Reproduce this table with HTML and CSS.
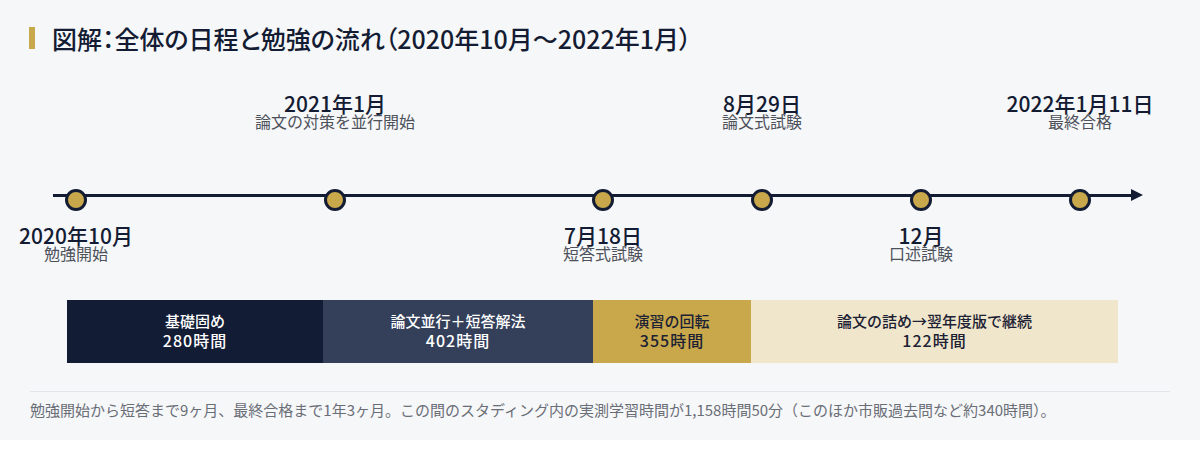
FILE: index.html
```html
<!DOCTYPE html>
<html lang="ja">
<head>
<meta charset="utf-8">
<title>図解：全体の日程と勉強の流れ</title>
<link rel="stylesheet" href="styles.css">
</head>
<body>
<div class="panel">
  <h2 class="title"><span class="accent"></span><span class="title-text">図解：全体の日程と勉強の流れ（2020年10月〜2022年1月）</span></h2>

  <div class="timeline">
    <div class="axis"></div>
    <div class="arrow"></div>

    <div class="event" style="left:46px">
      <div class="lbl-top"></div>
      <div class="dot"></div>
      <div class="lbl-bot"><div class="date">2020年10月</div><div class="sub">勉強開始</div></div>
    </div>
    <div class="event" style="left:305px">
      <div class="lbl-top"><div class="date">2021年1月</div><div class="sub">論文の対策を並行開始</div></div>
      <div class="dot"></div>
      <div class="lbl-bot"></div>
    </div>
    <div class="event" style="left:573px">
      <div class="lbl-top"></div>
      <div class="dot"></div>
      <div class="lbl-bot"><div class="date">7月18日</div><div class="sub">短答式試験</div></div>
    </div>
    <div class="event" style="left:732px">
      <div class="lbl-top"><div class="date">8月29日</div><div class="sub">論文式試験</div></div>
      <div class="dot"></div>
      <div class="lbl-bot"></div>
    </div>
    <div class="event" style="left:891px">
      <div class="lbl-top"></div>
      <div class="dot"></div>
      <div class="lbl-bot"><div class="date">12月</div><div class="sub">口述試験</div></div>
    </div>
    <div class="event" style="left:1050px">
      <div class="lbl-top"><div class="date">2022年1月11日</div><div class="sub">最終合格</div></div>
      <div class="dot"></div>
      <div class="lbl-bot"></div>
    </div>
  </div>

  <div class="phases">
    <div class="phase p1"><div class="ph-name">基礎固め</div><div class="ph-hours">280時間</div></div>
    <div class="phase p2"><div class="ph-name">論文並行＋短答解法</div><div class="ph-hours">402時間</div></div>
    <div class="phase p3"><div class="ph-name">演習の回転</div><div class="ph-hours">355時間</div></div>
    <div class="phase p4"><div class="ph-name">論文の詰め→翌年度版で継続</div><div class="ph-hours">122時間</div></div>
  </div>

  <p class="note">勉強開始から短答まで9ヶ月、最終合格まで1年3ヶ月。この間のスタディング内の実測学習時間が1,158時間50分（このほか市販過去問など約340時間）。</p>
</div>
</body>
</html>
```

FILE: styles.css
```css
* { box-sizing: border-box; }

html, body {
  margin: 0;
  padding: 0;
  background: #ffffff;
  font-family: "Noto Sans CJK JP", "Noto Sans", sans-serif;
  color: #141c33;
}

.panel {
  background: #f6f7f9;
  height: 440px;
  padding: 22px 30px 0;
}

.title {
  display: flex;
  align-items: center;
  gap: 17px;
  margin: 0;
  height: 32px;
  font-size: 25px;
  line-height: 32px;
  font-weight: 500;
  color: #141c33;
  font-feature-settings: "palt";
}

.accent {
  display: block;
  width: 6px;
  height: 22px;
  margin-left: -1px;
  background: #c9a84b;
}

.timeline {
  position: relative;
  height: 190px;
  margin-top: 26px;
}

.axis {
  position: absolute;
  left: 23px;
  top: 114px;
  width: 1080px;
  height: 3px;
  background: #141c33;
}

.arrow {
  position: absolute;
  left: 1101px;
  top: 109px;
  width: 0;
  height: 0;
  border-top: 6.5px solid transparent;
  border-bottom: 6.5px solid transparent;
  border-left: 12px solid #141c33;
}

.event {
  position: absolute;
  top: 0;
  width: 220px;
  margin-left: -110px;
  display: flex;
  flex-direction: column;
  align-items: center;
  white-space: nowrap;
}

.lbl-top {
  height: 37px;
  margin-top: 13px;
  text-align: center;
}

.lbl-bot {
  height: 37px;
  margin-top: 14px;
  text-align: center;
}

.dot {
  width: 22px;
  height: 22px;
  margin-top: 59px;
  border-radius: 50%;
  border: 3px solid #141c33;
  background: #c9a84b;
}

.date {
  font-size: 21px;
  line-height: 20px;
  font-weight: 500;
  color: #141c33;
}

.sub {
  font-size: 16px;
  line-height: 16px;
  font-weight: 400;
  color: #4d515a;
}

.phases {
  display: flex;
  margin: 30px 0 0 37px;
  width: 1051px;
  height: 63px;
}

.phase {
  display: flex;
  flex-direction: column;
  align-items: center;
  justify-content: center;
  padding-bottom: 3px;
  font-weight: 500;
  text-align: center;
}

.ph-name {
  font-size: 15px;
  line-height: 19px;
}

.ph-hours {
  font-size: 16px;
  line-height: 20px;
  letter-spacing: 1px;
}

.p1 { width: 256px; background: #131c35; color: #ffffff; }
.p2 { width: 270px; background: #343f5a; color: #ffffff; }
.p3 { width: 158px; background: #c9a84b; color: #1c2133; }
.p4 { width: 367px; background: #efe6cc; color: #1c2133; }

.note {
  margin: 28px 0 0;
  border-top: 1px solid #e2e5ea;
  padding-top: 8px;
  font-size: 15px;
  line-height: 20px;
  font-weight: 400;
  color: #6a6e77;
  white-space: nowrap;
}
```
